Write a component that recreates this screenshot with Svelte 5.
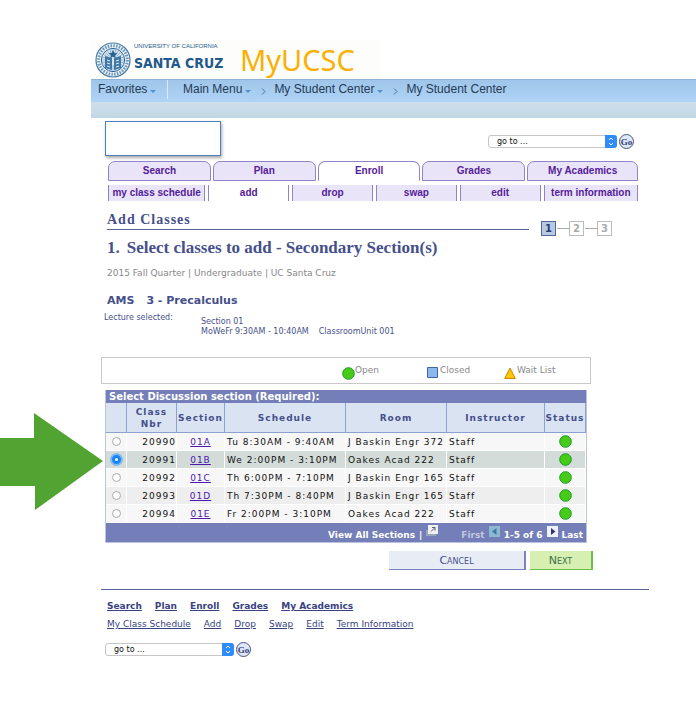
<script>
  const tabs = ['Search', 'Plan', 'Enroll', 'Grades', 'My Academics'];
  const subtabs = ['my class schedule', 'add', 'drop', 'swap', 'edit', 'term information'];
  const footerSub = ['My Class Schedule', 'Add', 'Drop', 'Swap', 'Edit', 'Term Information'];
  const rows = [
    { nbr: '20990', section: '01A', schedule: 'Tu 8:30AM - 9:40AM', room: 'J Baskin Engr 372' },
    { nbr: '20991', section: '01B', schedule: 'We 2:00PM - 3:10PM', room: 'Oakes Acad 222' },
    { nbr: '20992', section: '01C', schedule: 'Th 6:00PM - 7:10PM', room: 'J Baskin Engr 165' },
    { nbr: '20993', section: '01D', schedule: 'Th 7:30PM - 8:40PM', room: 'J Baskin Engr 165' },
    { nbr: '20994', section: '01E', schedule: 'Fr 2:00PM - 3:10PM', room: 'Oakes Acad 222' }
  ];
  const spokes = Array.from({ length: 24 }, (_, i) => i * 15);
  let selected = $state('20991');
</script>

{#snippet goTo(id)}
  <form class="goto" onsubmit={(e) => e.preventDefault()}>
    <label class="pick" for={id}>
      <select {id} aria-label="Go to page"><option>go to ...</option></select>
      <svg viewBox="0 0 12 13" aria-hidden="true">
        <path d="M0 0h9a3 3 0 0 1 3 3v7a3 3 0 0 1-3 3H0z" fill="#2f8dfb" />
        <path d="M4 5l2-2 2 2M4 8l2 2 2-2" fill="none" stroke="#fff" />
      </svg>
    </label>
    <button class="go">Go</button>
  </form>
{/snippet}

{#snippet openDot()}
  <svg class="dot" viewBox="0 0 13 13" role="img" aria-label="Open">
    <circle cx="6.5" cy="6.5" r="5.8" fill="#47cb18" stroke="#159c22" />
  </svg>
{/snippet}

<div class="page">
  <header>
    <div class="brand">
      <svg class="seal" viewBox="0 0 36 36" aria-hidden="true">
        <circle cx="18" cy="18" r="17" fill="#f2f6f7" stroke="#3f78a9" stroke-width="1.2" />
        <circle cx="18" cy="18" r="14.3" fill="none" stroke="#6c97ba" stroke-width="3" stroke-dasharray="1.6 1.2" />
        <circle cx="18" cy="18" r="11.6" fill="#d9e5ec" stroke="#24649b" />
        {#each spokes as a}
          <path d="M18 13V7.5" stroke="#6c97ba" stroke-width=".6" transform="rotate({a} 18 18)" />
        {/each}
        <path d="M10 14l7 2v12l-7-2zM26 14l-7 2v12l7-2z" fill="#3f78a9" />
        <path d="M12 18l3 1M12 21l3 1M12 24l3 1M24 18l-3 1M24 21l-3 1M24 24l-3 1" stroke="#e8f0f5" />
        <path d="M18 8l1.4 3 3 .3-2.3 2 .7 3-2.800-1.600-2.800 1.600.7-3-2.300-2 3-.3z" fill="#24649b" />
      </svg>
      <div class="univ"><small>UNIVERSITY OF CALIFORNIA</small><b>SANTA CRUZ</b></div>
      <span class="product">MyUCSC</span>
    </div>
    <nav class="crumbs" aria-label="Breadcrumb">
      <a class="fav" href="#favorites">Favorites <i></i></a>
      <a class="menu" href="#menu">Main Menu <i></i></a>
      <svg viewBox="0 0 5 7" aria-hidden="true"><path d="M1 .5l3 3-3 3" /></svg>
      <a href="#center">My Student Center <i></i></a>
      <svg viewBox="0 0 5 7" aria-hidden="true"><path d="M1 .5l3 3-3 3" /></svg>
      <a href="#current">My Student Center</a>
    </nav>
    <div class="strip"></div>
  </header>

  <main>
    <div class="top">
      <div class="namebox"></div>
      {@render goTo('goto-top')}
    </div>
    <nav class="tabs" aria-label="Sections">
      {#each tabs as t}<a href="#{t}" class:active={t === 'Enroll'}>{t}</a>{/each}
    </nav>
    <nav class="subtabs" aria-label="Enroll pages">
      {#each subtabs as t}<a href="#{t}" class:active={t === 'add'}>{t}</a>{/each}
    </nav>

    <div class="titlebar">
      <h1>Add Classes</h1>
      <ol class="steps" aria-label="Progress">
        <li class="current">1</li><li>2</li><li>3</li>
      </ol>
    </div>
    <h2><span>1.</span>Select classes to add - Secondary Section(s)</h2>
    <p class="term">2015 Fall Quarter | Undergraduate | UC Santa Cruz</p>
    <h3><span>AMS</span>3 - Precalculus</h3>
    <div class="lecture">
      <span class="lbl">Lecture selected:</span>
      <div class="info">Section 01<br />MoWeFr 9:30AM - 10:40AM<span>ClassroomUnit 001</span></div>
    </div>

    <div class="legend">
      <span class="key open">{@render openDot()}Open</span>
      <span class="key closed">
        <svg class="square" viewBox="0 0 11 11" aria-hidden="true"><path d="M.5.5h10v10H.5z" fill="#8db8ee" stroke="#3f62a8" /></svg>Closed
      </span>
      <span class="key">
        <svg class="tri" viewBox="0 0 12 12" aria-hidden="true"><path d="M6 1l5.300 10.500H.7z" fill="#ffc800" stroke="#cb8607" /></svg>Wait List
      </span>
    </div>

    <div class="grid">
      <table>
        <caption>Select Discussion section (Required):</caption>
        <colgroup><col class="c1" /><col class="c2" /><col class="c3" /><col class="c4" /><col class="c5" /><col class="c6" /><col class="c7" /></colgroup>
        <thead>
          <tr><th aria-label="Select"></th><th>Class<br />Nbr</th><th>Section</th><th>Schedule</th><th>Room</th><th>Instructor</th><th>Status</th></tr>
        </thead>
        <tbody>
          {#each rows as r}
            <tr class:selected={selected === r.nbr}>
              <td class="mid"><input type="radio" name="section" value={r.nbr} bind:group={selected} aria-label="Section {r.section}" /></td>
              <td class="num">{r.nbr}</td>
              <td class="mid"><a href="#{r.section}">{r.section}</a></td>
              <td>{r.schedule}</td>
              <td>{r.room}</td>
              <td>Staff</td>
              <td class="mid">{@render openDot()}</td>
            </tr>
          {/each}
        </tbody>
      </table>
      <div class="pager">
        <a href="#all">View All Sections</a><span>|</span>
        <svg class="pop" viewBox="0 0 12 11" aria-hidden="true">
          <path d="M0 5h3v4h7v2H0z" fill="#9aa3b8" />
          <path d="M2 0h10v9H2z" fill="#eef1ef" />
          <path d="M5 6.500l4-4M6 2.500h3v3" fill="none" stroke="#59617c" />
        </svg>
        <span class="first">First</span>
        <button class="arrow off" aria-label="Previous page" disabled><svg viewBox="0 0 11 11"><path d="M7.500 2v7L3 5.500z" fill="#42799f" /></svg></button>
        <span>1-5 of 6</span>
        <button class="arrow" aria-label="Next page"><svg viewBox="0 0 11 11"><path d="M4 2v7l4.500-3.500z" fill="#343a66" /></svg></button>
        <a href="#last">Last</a>
      </div>
    </div>

    <div class="actions">
      <button class="cancel">Cancel</button>
      <button class="next">Next</button>
    </div>

    <footer>
      <nav class="links strong" aria-label="Footer sections">{#each tabs as t}<a href="#{t}">{t}</a>{/each}</nav>
      <nav class="links" aria-label="Footer pages">{#each footerSub as t}<a href="#{t}">{t}</a>{/each}</nav>
      {@render goTo('goto-bottom')}
    </footer>
  </main>

  <svg class="pointer" viewBox="0 0 103 98" aria-hidden="true">
    <path d="M0 25h34V0l69 48-68 49V73H0z" fill="#51a432" />
  </svg>
</div>

<style>
  :global(body) { margin: 0; background: #fff; }
  .page {
    position: relative;
    padding: 40px 0;
    font-family: "DejaVu Sans", sans-serif;
    font-size: 9px;
    line-height: 12px;
    color: #454f8b;
  }
  .page :global(*) { box-sizing: border-box; }
  a { color: inherit; text-decoration: none; }
  svg { display: block; flex: none; }
  h1, h2, h3, p, ol { margin: 0; padding: 0; }
  button { font: inherit; padding: 0; cursor: pointer; }

  header { margin-left: 91px; }
  .brand { display: flex; height: 39px; width: 289px; padding-left: 4px; background: #fdfefb; align-items: center; }
  .seal { width: 36px; height: 36px; }
  .univ { width: 88px; margin-left: 3px; display: flex; flex-direction: column; color: #22598c; white-space: nowrap; }
  .univ small { font: 6px/8px "Liberation Sans", sans-serif; }
  .univ b { font: bold 14px/27px "DejaVu Sans Condensed", sans-serif; }
  .product { margin-left: 18px; font: 29px/39px "Noto Sans", sans-serif; color: #fab005; }
  .crumbs {
    display: flex; align-items: center; height: 23px; padding: 0 0 3px 7px;
    background: linear-gradient(#9fc6ea, #aed3f5); border-top: 1px solid #8fb4d6;
    font: 12px/19px "Liberation Sans", sans-serif; color: #263a54; white-space: nowrap;
  }
  .crumbs a { display: flex; align-items: center; }
  .crumbs .fav { width: 70px; border-right: 1px solid #dcebf8; }
  .crumbs .menu { margin-left: 15px; }
  .crumbs i { margin: 3px 0 0 3px; border: 3px solid transparent; border-top-color: #5490cb; border-bottom: 0; }
  .crumbs svg { width: 5px; height: 7px; margin: 3px 8px 0 10px; fill: none; stroke: #4d719b; }
  .strip { height: 16px; background: linear-gradient(#cfdfeb, #c1d6e4); }

  main { margin: 0 47px 0 101px; }
  .top { display: flex; justify-content: space-between; padding: 3px 15px 5px 4px; }
  .namebox { width: 116px; height: 35px; border: 1px solid #4b80bd; box-shadow: 1px 2px 3px #aaa; }
  .goto { display: flex; align-items: center; gap: 2px; height: 15px; }
  .top .goto { margin-top: 13px; }
  .pick { position: relative; }
  select {
    display: block; appearance: none; width: 129px; height: 13px; padding: 0 14px 0 8px;
    border: 1px solid #c6c6c6; border-radius: 3px; background: #fff;
    font: 8px/11px "DejaVu Sans", sans-serif; color: #111;
  }
  .pick svg { position: absolute; top: 0; right: 0; width: 12px; height: 13px; pointer-events: none; }
  .go {
    width: 15px; height: 15px; border: 1px solid #4c5680; border-radius: 50%; background: #dfe8f8;
    font: bold 9px/12px "Liberation Serif", serif; color: #343e7c;
  }

  .tabs, .subtabs { display: flex; gap: 2px; margin: 0 11px 0 7px; font: bold 10px/17px "Liberation Sans", sans-serif; color: #55209a; text-align: center; white-space: nowrap; }
  .tabs a { flex: 103 1 0; height: 20px; background: #e9e4f8; border: 1px solid #9284c8; border-radius: 7px 7px 0 0; }
  .tabs a:last-child { flex-grow: 111; }
  .tabs .active { background: #fff; border-bottom-color: #fff; }
  .subtabs { gap: 3px; margin-top: 4px; }
  .subtabs a { flex: 81 1 0; height: 16px; line-height: 15px; background: #e9e4f8; border: solid #9284c8; border-width: 0 1px; }
  .subtabs a:first-child { flex-grow: 98; }
  .subtabs a:last-child { flex-grow: 95; }
  .subtabs .active { background: #fff; }

  .titlebar { display: flex; align-items: flex-end; margin: 11px 37px 0 6px; gap: 12px; height: 24px; }
  h1 { flex: 1; height: 18px; border-bottom: 1px solid #5b649b; font: bold 14px/16px "Liberation Serif", serif; letter-spacing: 1px; margin-bottom: 6px; }
  .steps { display: flex; list-style: none; font: bold 10px/13px "DejaVu Sans", sans-serif; }
  .steps li { position: relative; width: 15px; height: 15px; border: 1px solid #bbb; text-align: center; color: #aaa; }
  .steps li + li { margin-left: 13px; }
  .steps li + li::before { content: ""; position: absolute; right: 100%; top: 6px; width: 13px; border-top: 1px solid #aaa; }
  .steps .current { border-color: #56659d; background: #b6cae2; color: #303b70; }
  h2 { margin: 3px 0 0 6px; font: bold 17px/17px "Liberation Serif", serif; white-space: nowrap; }
  h2 span { margin-right: 7px; }
  .term { margin: 11px 0 0 6px; font-size: 9px; color: #888; }
  h3 { margin: 15px 0 0 6px; font: bold 11px/14px "DejaVu Sans", sans-serif; }
  h3 span { margin-right: 12px; }
  .lecture { display: flex; margin: 5px 0 0 3px; font-size: 8px; line-height: 10px; }
  .lbl { width: 97px; }
  .info { margin-top: 4px; }
  .info span { margin-left: 10px; }

  .legend { display: flex; max-width: 490px; height: 27px; margin-top: 20px; padding: 6px 0 0 240px; border: 1px solid #c9c9c9; color: #888; white-space: nowrap; }
  .key { display: flex; }
  .open { width: 85px; }
  .closed { width: 77px; }
  .key svg { margin-top: 3px; }
  .dot { width: 13px; height: 13px; }
  .square { width: 11px; height: 11px; margin-right: 2px; }
  .tri { width: 12px; height: 12px; margin-right: 1px; }

  .grid { max-width: 482px; margin: 6px 0 0 4px; border: solid #bac3df; border-width: 0 1px 1px; letter-spacing: 1px; }
  table { width: 100%; border-collapse: separate; border-spacing: 0; table-layout: fixed; }
  caption { height: 13px; padding-left: 3px; background: #747eb8; color: #fff; font-weight: bold; font-size: 10px; line-height: 13px; text-align: left; letter-spacing: 0; }
  .c1 { width: 21px; } .c2 { width: 50px; } .c3 { width: 48px; } .c4 { width: 121px; } .c5 { width: 101px; } .c6 { width: 98px; }
  th { height: 30px; padding: 0; background: #dae3f2; border: solid #8ba1d1; border-width: 0 1px 1px 0; font-size: 9px; line-height: 12px; }
  td { height: 18px; padding: 0 0 0 2px; background: #f7f7f7; border: solid #fff; border-width: 0 1px 1px 0; color: #111; line-height: 12px; white-space: nowrap; }
  tr:nth-child(even) td { background: #eee; }
  tr.selected td { background: #d3dcd8; }
  .mid { text-align: center; padding: 0; }
  .mid svg { margin: 0 auto; }
  .num { text-align: right; }
  td a { color: #4c18b0; text-decoration: underline; }
  input { appearance: none; display: block; width: 9px; height: 9px; margin: 0 auto; border: 1px solid #aaa; border-radius: 50%; background: #fff; }
  input:checked { border: 3px solid #1785f6; box-shadow: 0 0 0 2px #80b9ee; }

  .pager { display: flex; align-items: center; justify-content: flex-end; gap: 4px; height: 19px; padding: 0 3px; background: #747eb8; color: #fff; font-weight: bold; letter-spacing: 0; white-space: nowrap; }
  .pager > a, .pager > span { padding-top: 5px; }
  .pop { width: 12px; height: 11px; margin-bottom: 5px; }
  .first { margin-left: 19px; color: #c2c6dc; }
  .arrow { width: 11px; height: 11px; margin-bottom: 3px; border: 0; background: #edf1fa; }
  .arrow.off { background: #8db8d4; }

  .actions { display: flex; justify-content: flex-end; gap: 4px; max-width: 492px; margin-top: 8px; }
  .actions button { height: 19px; border-style: solid; border-width: 0 2px 1px 0; font-variant: small-caps; font-size: 11px; line-height: 17px; }
  .cancel { width: 137px; background: #e8edf5; border-color: #7985bd; color: #454f8b; }
  .next { width: 63px; background: #d7efb0; border-color: #6abf4b; color: #39704a; }

  footer { margin-top: 19px; padding: 10px 0 0 4px; border-top: 1px solid #5b649b; }
  .links { display: flex; gap: 13px; margin: 0 0 6px 2px; color: #39437f; white-space: nowrap; }
  .links a { text-decoration: underline; }
  .strong { font-weight: bold; }
  footer .goto { margin-top: 12px; }

  .pointer { position: absolute; left: 0; top: 413px; width: 103px; height: 98px; }
</style>
